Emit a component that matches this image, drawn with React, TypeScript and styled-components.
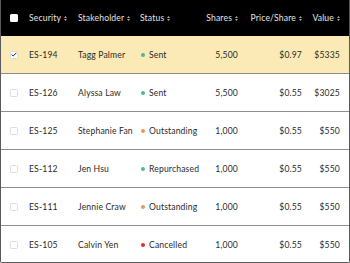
import React from "react";
import styled, { createGlobalStyle } from "styled-components";

const Global = createGlobalStyle`
  html, body { margin: 0; padding: 0; background: #fff; }
  body { font-family: Lato, "Noto Sans", Arial, sans-serif; }
  * { box-sizing: border-box; }
`;

const COLS = "28px 49px 62px 58px 40px 64px 38px 9px";

const Table = styled.div`
  width: 350px;
  height: 263px;
  overflow: hidden;
  border: 1px solid #5a5a5a;
  border-top: none;
  border-radius: 0 0 2px 2px;
  background: #fff;
`;

const HeadRow = styled.div`
  display: grid;
  grid-template-columns: ${COLS};
  align-items: center;
  height: 36px;
  background: #000;
  margin: 0 -1px;
  padding: 0 1px;
  color: #e4e4e4;
  font-size: 8.6px;
`;

const Row = styled.div<{ $selected?: boolean }>`
  display: grid;
  grid-template-columns: ${COLS};
  align-items: center;
  height: 37px;
  background: ${(p) => (p.$selected ? "#fbeab5" : "#fff")};
  color: #2a2a2a;
  font-size: 8.6px;
  & + & { border-top: 1px solid #8e8e8e; height: 38px; }
`;

const Cell = styled.div<{ $right?: boolean }>`
  display: flex;
  align-items: center;
  justify-content: ${(p) => (p.$right ? "flex-end" : "flex-start")};
  white-space: nowrap;
  letter-spacing: 0.15px;
`;

const CheckCell = styled.div`
  display: flex;
  align-items: center;
  padding-left: 9px;
`;

const Box = styled.div<{ $variant: "head" | "on" | "off" }>`
  width: 8px;
  height: 8px;
  border-radius: 1.5px;
  display: flex;
  align-items: center;
  justify-content: center;
  background: #fff;
  border: ${(p) => (p.$variant === "head" ? "none" : "1px solid #dcdcdc")};
`;

const Sort = styled.svg`
  margin-left: 3px;
  flex: none;
`;

const Dot = styled.span<{ $color: string }>`
  width: 4px;
  height: 4px;
  border-radius: 50%;
  background: ${(p) => p.$color};
  margin-right: 4px;
  margin-left: 1px;
  flex: none;
`;

const SortIcon = () => (
  <Sort width="3" height="5" viewBox="0 0 3 5">
    <path d="M1.5 0 L3 2 L0 2 Z M0 3 L3 3 L1.5 5 Z" fill="#a8a8a8" />
  </Sort>
);

const statusColor: Record<string, string> = {
  Sent: "#4fb5a0",
  Outstanding: "#e5985a",
  Repurchased: "#4fb5a0",
  Cancelled: "#d8332c",
};

const rows = [
  { id: "ES-194", name: "Tagg Palmer", status: "Sent", shares: "5,500", price: "$0.97", value: "$5335", selected: true },
  { id: "ES-126", name: "Alyssa Law", status: "Sent", shares: "5,500", price: "$0.55", value: "$3025" },
  { id: "ES-125", name: "Stephanie Fan", status: "Outstanding", shares: "1,000", price: "$0.55", value: "$550" },
  { id: "ES-112", name: "Jen Hsu", status: "Repurchased", shares: "1,000", price: "$0.55", value: "$550" },
  { id: "ES-111", name: "Jennie Craw", status: "Outstanding", shares: "1,000", price: "$0.55", value: "$550" },
  { id: "ES-105", name: "Calvin Yen", status: "Cancelled", shares: "1,000", price: "$0.55", value: "$550" },
];

const Check = () => (
  <svg width="6" height="5" viewBox="0 0 6 5">
    <path d="M0.6 2.6 L2.2 4 L5.4 0.8" fill="none" stroke="#222" strokeWidth="1" />
  </svg>
);

export default function App() {
  return (
    <>
      <Global />
      <Table>
        <HeadRow>
          <CheckCell><Box $variant="head" /></CheckCell>
          <Cell>Security<SortIcon /></Cell>
          <Cell>Stakeholder<SortIcon /></Cell>
          <Cell>Status<SortIcon /></Cell>
          <Cell $right>Shares<SortIcon /></Cell>
          <Cell $right>Price/Share<SortIcon /></Cell>
          <Cell $right>Value<SortIcon /></Cell>
          <div />
        </HeadRow>
        {rows.map((r) => (
          <Row key={r.id} $selected={r.selected}>
            <CheckCell>
              <Box $variant={r.selected ? "on" : "off"}>{r.selected && <Check />}</Box>
            </CheckCell>
            <Cell>{r.id}</Cell>
            <Cell>{r.name}</Cell>
            <Cell><Dot $color={statusColor[r.status]} />{r.status}</Cell>
            <Cell $right>{r.shares}</Cell>
            <Cell $right>{r.price}</Cell>
            <Cell $right>{r.value}</Cell>
            <div />
          </Row>
        ))}
      </Table>
    </>
  );
}
